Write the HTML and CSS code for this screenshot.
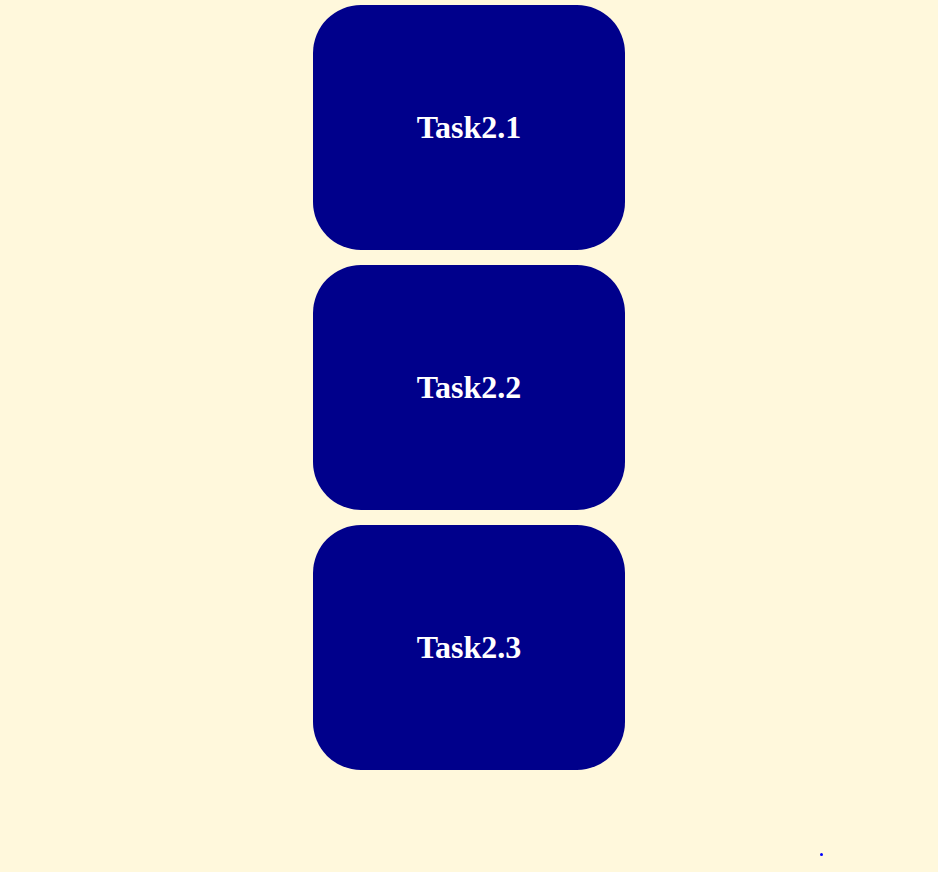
FILE: index.html
```html
<!DOCTYPE html>
<html lang="en">
<head>
<meta charset="utf-8">
<title>Tasks</title>
<link rel="stylesheet" href="styles.css">
</head>
<body>
<main class="tasks">
  <a class="task" href="#task1">Task2.1</a>
  <a class="task" href="#task2">Task2.2</a>
  <a class="task" href="#task3">Task2.3</a>
</main>
<span class="dot"></span>
</body>
</html>
```
FILE: styles.css
```css
body {
  margin: 0;
  min-height: 100vh;
  background: cornsilk;
  font-family: "Liberation Serif", "Times New Roman", serif;
}

.tasks {
  display: flex;
  flex-direction: column;
  align-items: center;
  gap: 15px;
  padding: 5px;
}

.task {
  display: flex;
  align-items: center;
  justify-content: center;
  width: 312px;
  height: 245px;
  border-radius: 48px;
  background: darkblue;
  color: #fff;
  font-size: 32px;
  font-weight: bold;
  text-decoration: none;
}

.dot {
  position: fixed;
  right: 115px;
  bottom: 16px;
  width: 3px;
  height: 3px;
  border-radius: 50%;
  background: blue;
}
```
